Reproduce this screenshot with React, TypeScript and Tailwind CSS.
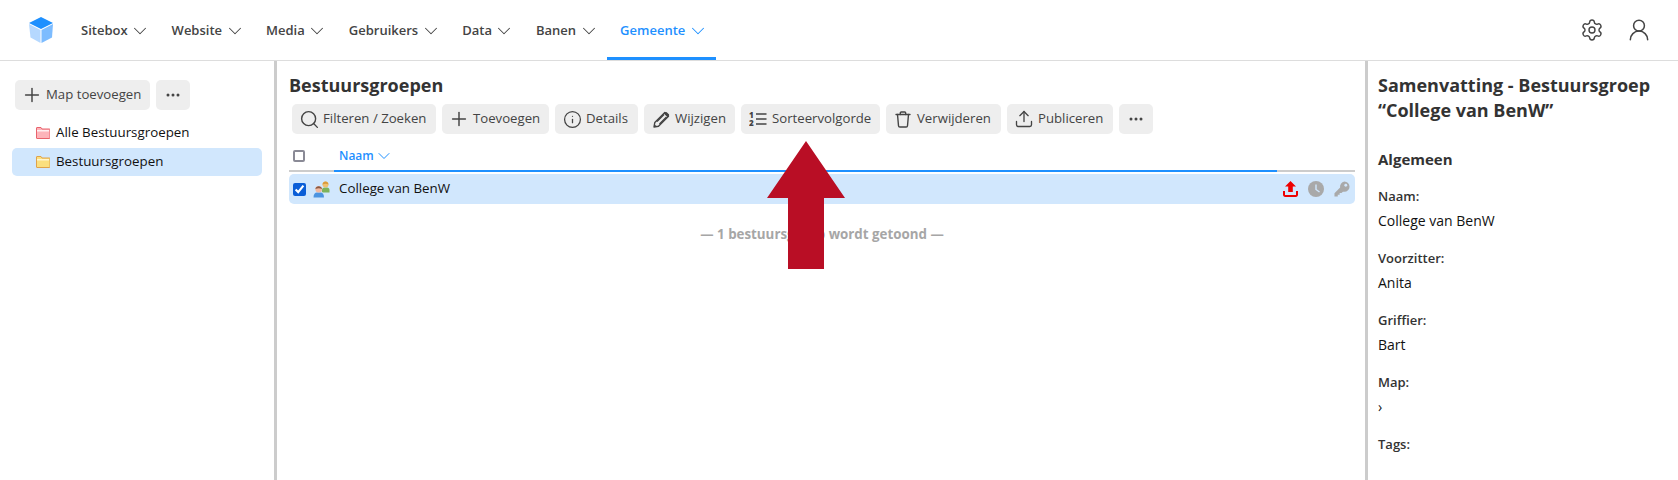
import { ChevronDown, Info, Plus, Search, Settings, Upload, UserRound } from 'lucide-react';
import clsx from 'clsx';
import type { ReactNode } from 'react';

const navItems = ['Sitebox', 'Website', 'Media', 'Gebruikers', 'Data', 'Banen'];

function Logo() {
  return (
    <svg width="28" height="30" viewBox="0 0 28 30" aria-hidden>
      <path d="M2 9 L13.5 15 L13.5 28 L3.5 22.5 Z" fill="#b5d8ff" />
      <path d="M26 9 L14.5 15 L14.5 28 L25 22.5 Z" fill="#7dbcff" />
      <path d="M14 2 L26 8 L14 14 L2 8 Z" fill="#1e90ff" />
    </svg>
  );
}

function FolderIcon({ tone }: { tone: 'red' | 'yellow' }) {
  const stroke = tone === 'red' ? '#e8626c' : '#dfa24a';
  const fill = tone === 'red' ? '#fdb4ba' : '#fbdf7e';
  const light = tone === 'red' ? '#ffeef0' : '#fff6cf';
  return (
    <svg width="14" height="12" viewBox="0 0 14 12" aria-hidden>
      <path d="M.5 1a.5.5 0 0 1 .5-.5h4l1 1.5h7.500a.5.5 0 0 1 .5.5v8.500a.5.5 0 0 1-.5.5H1a.5.5 0 0 1-.5-.5z" fill={fill} stroke={stroke} />
      <rect x="1" y="3" width="12" height="1.500" fill={light} />
    </svg>
  );
}

function GroupIcon() {
  return (
    <svg width="17" height="17" viewBox="0 0 17 17" aria-hidden>
      <path d="M9 11V9c0-1.500 1-2.500 2.500-2.500h2.500c1.500 0 2.500 1 2.500 2.500v2.500H10z" fill="#7fb35a" />
      <circle cx="12.500" cy="3.500" r="3" fill="#f0c070" />
      <path d="M9.500 3.500c.4-4 5.600-4 6 0-1.800-1-4-1-6 0z" fill="#d99a3a" />
      <path d="M.5 16.500c0-3.500 1.500-5 3.500-5h3.500c2 0 3.500 1.500 3.500 5z" fill="#4c94e0" />
      <circle cx="5.700" cy="8.300" r="3.300" fill="#f2b9a0" />
      <path d="M2.400 8c.3-3.800 6.300-3.800 6.600 0-2.200-1-4.400-1-6.600 0z" fill="#8a5a44" />
    </svg>
  );
}

function DotsIcon() {
  return (
    <svg width="14" height="4" viewBox="0 0 14 4" fill="#444" aria-hidden>
      <circle cx="2" cy="2" r="1.500" />
      <circle cx="7" cy="2" r="1.500" />
      <circle cx="12" cy="2" r="1.500" />
    </svg>
  );
}

function SortIcon() {
  return (
    <svg width="18" height="16" viewBox="0 0 18 16" fill="none" aria-hidden>
      <text x="0" y="7" fontSize="8" fontWeight="800" fill="#444" fontFamily="'Open Sans', sans-serif">1</text>
      <text x="0" y="15" fontSize="8" fontWeight="800" fill="#444" fontFamily="'Open Sans', sans-serif">2</text>
      <path d="M7 3h10.500M7 8h10.500M7 13h10.500" stroke="#444" strokeWidth="1.500" />
    </svg>
  );
}

function PencilIcon() {
  return (
    <svg width="17" height="17" viewBox="0 0 17 17" fill="none" aria-hidden>
      <path d="M11.800 1.500 15.500 5.200 5.500 15.200 1 16l.8-4.500z" stroke="#444" strokeWidth="1.400" strokeLinejoin="round" />
      <path d="M11.800 1.500a1.500 1.500 0 0 1 2-.2l1.500 1.500a1.500 1.500 0 0 1 .2 2.400l-1 1L10.800 2.500z" fill="#444" />
      <path d="M4 10.500 11 3.500M6.500 13 13.500 6" stroke="#444" strokeWidth="1.400" />
      <path d="M1 16l.5-2.800 2.300 2.300z" fill="#444" />
    </svg>
  );
}

function TrashIcon() {
  return (
    <svg width="16" height="17" viewBox="0 0 16 17" fill="none" stroke="#444" strokeWidth="1.400" strokeLinecap="round" aria-hidden>
      <path d="M1 3.500h14" />
      <path d="M5.300 3.500V2a1 1 0 0 1 1-1h3.400a1 1 0 0 1 1 1v1.500" />
      <path d="M2.500 3.500l1 11.200A1.400 1.400 0 0 0 4.900 16h6.200a1.400 1.400 0 0 0 1.400-1.300l1-11.200" />
    </svg>
  );
}

function RedUpload() {
  return (
    <svg width="15" height="16" viewBox="0 0 15 16" aria-hidden>
      <path d="M7.500 0 13 5.500H9.800V11H5.200V5.500H2z" fill="#ee0000" />
      <path d="M1 10v3.500A1.300 1.300 0 0 0 2.300 15h10.400a1.300 1.300 0 0 0 1.300-1.500V10" fill="none" stroke="#ee0000" strokeWidth="2" />
    </svg>
  );
}

function ClockIcon() {
  return (
    <svg width="16" height="16" viewBox="0 0 16 16" aria-hidden>
      <circle cx="8" cy="8" r="8" fill="#a9a9a9" />
      <path d="M8 3.500V8.500L11.500 11" fill="none" stroke="#d1e7fd" strokeWidth="1.400" />
    </svg>
  );
}

function KeyIcon() {
  return (
    <svg width="16" height="16" viewBox="0 0 17 16" aria-hidden>
      <path d="M11 0a5.500 5.500 0 0 1 0 11 6 6 0 0 1-1.500-.2L8 12.300H6V14H4v2H.5v-3.500l6-6A5.500 5.500 0 0 1 11 0z" fill="#a9a9a9" />
      <circle cx="12.500" cy="4" r="1.500" fill="#d1e7fd" />
    </svg>
  );
}

// Knop met vast icoonvak van 22px, zodat de tekst overal op 31px begint.
function Btn({ icon, children, className }: { icon: ReactNode; children: ReactNode; className?: string }) {
  return (
    <button
      type="button"
      className={clsx(
        'flex h-[30px] shrink-0 items-center gap-[3px] rounded-[5px] bg-[#eeeeee] pl-[6px] text-[13.2px] font-medium text-[#444]',
        className,
      )}
    >
      <span className="flex w-[22px] justify-center">{icon}</span>
      {children}
    </button>
  );
}

function MoreBtn() {
  return (
    <button type="button" className="flex h-[30px] w-[34px] shrink-0 items-center justify-center rounded-[5px] bg-[#eeeeee]">
      <DotsIcon />
    </button>
  );
}

function Field({ label, value }: { label: string; value?: string }) {
  return (
    <div className="h-[62px]">
      <div className="h-[24px] text-[13px] font-semibold leading-[25px] text-[#333]">{label}</div>
      {value && <div className="h-[25px] text-[14px] leading-[25px] text-[#111]">{value}</div>}
    </div>
  );
}

export default function App() {
  return (
    <div className="flex h-[480px] w-[1678px] flex-col overflow-hidden bg-white font-['Open_Sans',sans-serif]">
      {/* hoofdmenu */}
      <header className="flex h-[61px] shrink-0 items-center border-b border-[#dddddd] pl-[27px] pr-[26px]">
        <Logo />
        <nav className="ml-[26px] flex h-full">
          {navItems.map((item) => (
            <div key={item} className="mr-[20.5px] flex items-center gap-[1.5px] pt-[2px] text-[13px] font-semibold text-[#444]">
              {item}
              <ChevronDown size={22} strokeWidth={1.1} />
            </div>
          ))}
          <div className="-ml-[13px] flex w-[109px] items-center gap-[1.5px] border-b-[3px] border-[#1e90ff] pl-[13px] pt-[5px] text-[13px] font-semibold text-[#1e90ff]">
            Gemeente
            <ChevronDown size={22} strokeWidth={1.1} />
          </div>
        </nav>
        <div className="ml-auto flex items-center gap-[22px] text-[#444]">
          <Settings size={24} strokeWidth={1.4} />
          <UserRound size={26} strokeWidth={1.4} />
        </div>
      </header>

      <div className="flex min-h-0 flex-1">
        {/* mappen */}
        <aside className="w-[277px] shrink-0 border-r-[3px] border-[#cccccc] pl-[12px] pr-[12px] pt-[19px]">
          <div className="ml-[3px] flex gap-[6px]">
            <Btn className="w-[135px]" icon={<Plus size={22} strokeWidth={1.6} />}>Map toevoegen</Btn>
            <MoreBtn />
          </div>
          <div className="mt-[8px] flex h-[30px] items-center gap-[6px] pl-[24px] text-[13.33px] text-[#111]">
            <FolderIcon tone="red" />
            Alle Bestuursgroepen
          </div>
          <div className="flex h-[28px] w-[250px] items-center gap-[6px] rounded-[5px] bg-[#d1e7fd] pl-[24px] text-[13.33px] text-[#111]">
            <FolderIcon tone="yellow" />
            Bestuursgroepen
          </div>
        </aside>

        {/* lijst */}
        <main className="relative min-w-0 flex-1 pl-[12px] pr-[11px] pt-[12px]">
          <h1 className="text-[18px] font-bold leading-[25px] text-[#333]">Bestuursgroepen</h1>
          <div className="ml-[3px] mt-[6px] flex gap-[6px]">
            <Btn className="w-[144px]" icon={<Search size={21} strokeWidth={1.6} />}>Filteren / Zoeken</Btn>
            <Btn className="w-[107px]" icon={<Plus size={22} strokeWidth={1.6} />}>Toevoegen</Btn>
            <Btn className="w-[83px]" icon={<Info size={19} strokeWidth={1.6} />}>Details</Btn>
            <Btn className="w-[91px]" icon={<PencilIcon />}>Wijzigen</Btn>
            <Btn className="w-[139px]" icon={<SortIcon />}>Sorteervolgorde</Btn>
            <Btn className="w-[115px]" icon={<TrashIcon />}>Verwijderen</Btn>
            <Btn className="w-[106px]" icon={<Upload size={20} strokeWidth={1.6} />}>Publiceren</Btn>
            <MoreBtn />
          </div>

          <div className="mt-[10px] flex h-[28px] w-[1066px]">
            <div className="flex w-[45px] items-center border-b-2 border-[#cccccc] pb-[2px] pl-[4px]">
              <span className="h-[12px] w-[12px] rounded-[2px] border-2 border-[#8a8a96] bg-white" />
            </div>
            <div className="flex w-[943px] items-center border-b-2 border-[#1e90ff] pb-[2px] pl-[5px] text-[12px] font-semibold text-[#1e90ff]">
              Naam
              <ChevronDown size={20} strokeWidth={1.2} />
            </div>
            <div className="w-[78px] border-b-2 border-[#cccccc]" />
          </div>

          <div className="mt-[2px] flex h-[30px] w-[1066px] items-center rounded-[5px] bg-[#d1e7fd] pl-[4px] pr-[5px]">
            <input type="checkbox" readOnly checked className="h-[13px] w-[13px] accent-[#0b5ed7]" />
            <span className="ml-[7px] flex"><GroupIcon /></span>
            <span className="ml-[9px] text-[13.33px] text-[#111]">College van BenW</span>
            <span className="ml-auto flex items-center gap-[10px]">
              <RedUpload />
              <ClockIcon />
              <KeyIcon />
            </span>
          </div>

          <p className="mt-[20px] w-[1066px] text-center text-[13.33px] font-bold leading-[20px] text-[#a6a6a6]">
            — 1 bestuursgroep wordt getoond —
          </p>

          {/* rode pijl over de knop */}
          <svg className="absolute left-[490px] top-[80px]" width="78" height="128" viewBox="0 0 78 128" aria-hidden>
            <path d="M39 0 78 57H57V128H21V57H0Z" fill="#b90e25" />
          </svg>
        </main>

        {/* samenvatting */}
        <aside className="w-[313px] shrink-0 border-l-[3px] border-[#cccccc] pl-[10px] pr-[5px] pt-[12px]">
          <h2 className="text-[18px] font-bold leading-[25px] text-[#333]">
            Samenvatting - Bestuursgroep
            <br />
            “College van BenW”
          </h2>
          <h3 className="mt-[24px] text-[15px] font-bold leading-[25px] text-[#333]">Algemeen</h3>
          <div className="mt-[12px]">
            <Field label="Naam:" value="College van BenW" />
            <Field label="Voorzitter:" value="Anita" />
            <Field label="Griffier:" value="Bart" />
            <Field label="Map:" value="›" />
            <Field label="Tags:" />
          </div>
        </aside>
      </div>
    </div>
  );
}
